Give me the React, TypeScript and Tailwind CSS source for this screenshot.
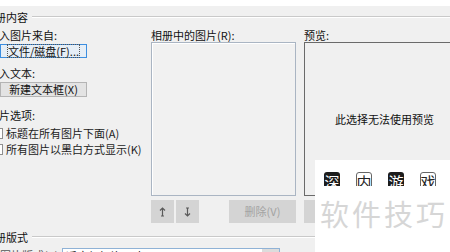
import React from "react";

const font = { fontFamily: '"Noto Sans CJK SC", "Noto Sans", sans-serif' };

const GroupHeader = ({ label, className = "" }: { label: string; className?: string }) => (
  <div className={`flex items-center ${className}`}>
    <span className="-ml-[16px] whitespace-nowrap text-[11px] leading-[14px] text-[#111]">{label}</span>
    <div className="ml-[4px] flex-1 border-t border-b border-t-[#c9c9c9] border-b-white" />
  </div>
);

const Arrow = ({ down }: { down?: boolean }) => (
  <svg width="7" height="10" viewBox="0 0 7 10" className={down ? "rotate-180" : ""}>
    <path d="M3.5 1 L3.5 9 M1 3.5 L3.5 1 L6 3.5 M2 9 L5 9" stroke="#5a5a5a" strokeWidth="1.2" fill="none" />
  </svg>
);

const CheckRow = ({ label, className = "" }: { label: string; className?: string }) => (
  <div className={`flex h-[14px] items-center ${className}`}>
    <div className="ml-[4px] h-[11px] w-[11px] shrink-0 border border-[#8f8f8f] bg-white" />
    <span className="ml-[3px] whitespace-nowrap text-[11px] leading-[14px] text-[#222]">{label}</span>
  </div>
);

const icons = [
  { ch: "深", dark: true },
  { ch: "内", dark: false },
  { ch: "游", dark: true },
  { ch: "戏", dark: false },
];

export default function App() {
  return (
    <div className="relative h-[252px] w-[450px] overflow-hidden bg-[#f0f0f0]" style={font}>
      <div className="h-[6px] bg-white" />

      <GroupHeader label="相册内容" className="h-[22px]" />

      <div className="flex">
        {/* left column */}
        <div className="-ml-[12px] flex w-[162px] shrink-0 flex-col">
          <div className="h-[14px] whitespace-nowrap text-[11px] leading-[14px] text-[#111]">插入图片来自:</div>
          <div className="ml-[12px] mt-[2px] flex h-[14px] w-[87px] items-center justify-center border border-[#3c8ee0] bg-[#e6eef6]">
            <span className="whitespace-nowrap text-[11px] leading-[12px] text-[#111] outline-1 outline-dotted outline-[#555]">文件/磁盘(F)...</span>
          </div>
          <div className="mt-[8px] h-[14px] whitespace-nowrap text-[11px] leading-[14px] text-[#111]">插入文本:</div>
          <div className="ml-[12px] mt-[2px] flex h-[15px] w-[87px] items-center justify-center border border-[#b4b4b4] bg-[#e3e3e3]">
            <span className="whitespace-nowrap text-[11px] leading-[13px] text-[#111]">新建文本框(X)</span>
          </div>
          <div className="mt-[11px] h-[14px] whitespace-nowrap text-[11px] leading-[14px] text-[#111]">图片选项:</div>
          <CheckRow label="标题在所有图片下面(A)" className="mt-[4px]" />
          <CheckRow label="所有图片以黑白方式显示(K)" className="mt-[2px]" />
        </div>

        {/* middle column */}
        <div className="flex w-[146px] shrink-0 flex-col">
          <div className="ml-[1px] h-[14px] whitespace-nowrap text-[11px] leading-[14px] text-[#111]">相册中的图片(R):</div>
          <div className="ml-[1px] h-[154px] w-[145px] border border-[#aab5c3] bg-[#f1f1f1] shadow-[inset_1px_1px_0_#ffffff]" />
          <div className="ml-[1px] mt-[4px] flex h-[23px] gap-[2px]">
            <div className="flex w-[23px] items-center justify-center bg-[#d4d4d4]">
              <Arrow />
            </div>
            <div className="flex w-[23px] items-center justify-center bg-[#d4d4d4]">
              <Arrow down />
            </div>
            <div className="ml-auto flex w-[67px] items-center justify-center bg-[#d4d4d4]">
              <span className="text-[11px] leading-[13px] text-[#a3a3a3]">删除(V)</span>
            </div>
          </div>
        </div>

        {/* right column */}
        <div className="ml-[8px] flex w-[161px] shrink-0 flex-col">
          <div className="h-[14px] whitespace-nowrap text-[11px] leading-[14px] text-[#111]">预览:</div>
          <div className="flex h-[154px] items-center justify-center border border-[#6a6a6a] bg-[#f0f0f0]">
            <span className="whitespace-nowrap text-[11px] leading-[14px] text-[#111]">此选择无法使用预览</span>
          </div>
          <div className="mt-[4px] h-[23px] w-[40px] bg-[#d4d4d4]" />
        </div>
      </div>

      <GroupHeader label="相册版式" className="mt-[6px] h-[16px]" />

      <div className="mt-[3px] flex items-start">
        <span className="w-[62px] whitespace-nowrap text-[11px] leading-[14px] text-[#555]">图片版式(P):</span>
        <div className="flex h-[18px] w-[218px] border border-[#8fb2d6] bg-white">
          <span className="ml-[3px] flex-1 whitespace-nowrap text-[11px] leading-[14px] text-[#111]">适应幻灯片尺寸</span>
          <div className="w-[17px] bg-[#dcdcdc]" />
        </div>
      </div>

      {/* watermark overlay */}
      <div className="absolute bottom-0 left-[315px] right-0 top-[160px] bg-white">
        <div className="ml-[9px] mt-[12px] flex gap-[16px]">
          {icons.map((ic) => (
            <div
              key={ic.ch}
              className={`flex h-[18px] w-[16px] items-center justify-center rounded-[3px] text-[15px] leading-[15px] ${
                ic.dark ? "bg-[#1c1c1c] text-white" : "border border-[#666] bg-white text-[#222]"
              }`}
            >
              {ic.ch}
            </div>
          ))}
        </div>
      </div>
      <div className="absolute bottom-0 left-[316px] right-0 top-[186px] bg-white">
        <div className="ml-[4px] mt-[9px] whitespace-nowrap text-[29px] leading-[36px] tracking-[3px] text-[#d6d6d6]">
          软件技巧
        </div>
      </div>
    </div>
  );
}
